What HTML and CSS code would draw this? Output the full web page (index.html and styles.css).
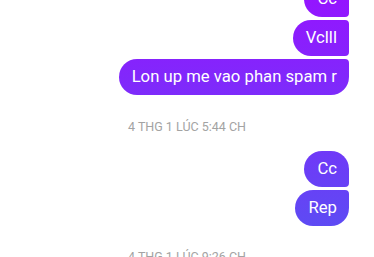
FILE: index.html
```html
<!DOCTYPE html>
<html lang="vi">
<head>
<meta charset="utf-8">
<link rel="stylesheet" href="styles.css">
</head>
<body>
<div class="thread">
  <div class="group">
    <div class="msg first">Cc</div>
    <div class="msg mid">Vclll</div>
    <div class="msg last">Lon up me vao phan spam r</div>
  </div>
  <div class="stamp">4 THG 1 LÚC 5:44 CH</div>
  <div class="group">
    <div class="msg first">Cc</div>
    <div class="msg last">Rep</div>
  </div>
  <div class="stamp stamp-low">4 THG 1 LÚC 9:26 CH</div>
</div>
</body>
</html>
```
FILE: styles.css
```css
html, body {
  margin: 0;
  padding: 0;
  background: #ffffff;
  overflow: hidden;
}
body {
  width: 374px;
  height: 257px;
  font-family: Roboto, "Noto Sans", sans-serif;
}
.thread {
  margin-top: -19px;
  display: flex;
  flex-direction: column;
}
.group {
  display: flex;
  flex-direction: column;
  align-items: flex-end;
  gap: 3px;
  padding-right: 25px;
}
.msg {
  color: #ffffff;
  font-size: 16.7px;
  line-height: 20px;
  padding: 8px 12px 8px 13px;
  border-radius: 18px;
  background: linear-gradient(to bottom, #9415ff 0px, #5652f2 257px);
  background-attachment: fixed;
  white-space: nowrap;
}
.msg.first {
  border-bottom-right-radius: 4px;
}
.msg.mid {
  border-top-right-radius: 4px;
  border-bottom-right-radius: 4px;
}
.msg.last {
  border-top-right-radius: 4px;
}
.stamp {
  text-align: center;
  font-size: 12.5px;
  line-height: 16px;
  color: #a3a3a3;
  margin: 24px 0 16px;
}
.stamp-low {
  margin: 23px 0 0;
}
```
